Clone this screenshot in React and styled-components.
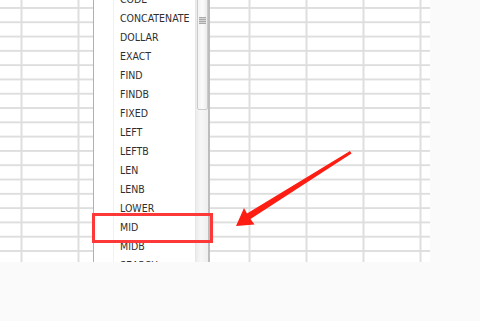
import React from "react";
import styled, { createGlobalStyle } from "styled-components";

const Global = createGlobalStyle`
  html, body { margin: 0; padding: 0; background: #fafafa; }
  body { font-family: "DejaVu Sans Condensed", "DejaVu Sans", sans-serif; }
`;

const Page = styled.div`
  width: 480px;
  height: 321px;
  background: #fafafa;
  overflow: hidden;
`;

const Sheet = styled.div`
  position: relative;
  width: 430px;
  height: 262px;
  overflow: hidden;
  background-color: #ffffff;
  background-image:
    linear-gradient(to bottom, #dedede 0, #dedede 1.5px, transparent 1.5px),
    linear-gradient(to right, #dedede 0, #dedede 2px, transparent 2px);
  background-size: 100% 14.3px, 57px 100%;
  background-position: 0 7px, 20.5px 0;
  display: flex;
`;

const Dropdown = styled.div`
  margin-left: 93px;
  width: 117px;
  height: 100%;
  display: flex;
  background: #ffffff;
  border-left: 1px solid #b0b0b0;
  border-right: 2px solid #bdbdbd;
  box-sizing: border-box;
`;

const List = styled.ul`
  flex: 1;
  list-style: none;
  margin: -10px 0 0 19px;
  padding: 0 0 0 6px;
  border-left: 1px solid #f2f2f2;
`;

const Item = styled.li`
  height: 19px;
  line-height: 19px;
  font-size: 10.5px;
  font-stretch: condensed;
  color: #2f2f2f;
  white-space: nowrap;
`;

const Scrollbar = styled.div`
  width: 12px;
  height: 100%;
  background: linear-gradient(to right, #ececec, #f7f7f7 40%, #efefef);
  border-left: 1px solid #e6e6e6;
  display: flex;
  flex-direction: column;
  align-items: center;
`;

const Thumb = styled.div`
  width: 11px;
  height: 112px;
  margin-top: -2px;
  box-sizing: border-box;
  border: 1px solid #cbcbcb;
  border-radius: 2px;
  background: linear-gradient(to right, #f3f3f3, #fbfbfb 50%, #ececec);
  display: flex;
  justify-content: center;
  padding-top: 18px;
`;

const Grip = styled.div`
  width: 7px;
  height: 7px;
  background: repeating-linear-gradient(
    to bottom,
    #a9a9a9 0,
    #a9a9a9 1px,
    #d6d6d6 1px,
    #d6d6d6 2px
  );
`;

const Highlight = styled.div`
  position: absolute;
  left: 92px;
  top: 213px;
  width: 121px;
  height: 30px;
  box-sizing: border-box;
  border: 3px solid #fd3838;
`;

const Arrow = styled.svg`
  position: absolute;
  left: 0;
  top: 0;
  width: 430px;
  height: 262px;
  pointer-events: none;
`;

const items = [
  "CODE",
  "CONCATENATE",
  "DOLLAR",
  "EXACT",
  "FIND",
  "FINDB",
  "FIXED",
  "LEFT",
  "LEFTB",
  "LEN",
  "LENB",
  "LOWER",
  "MID",
  "MIDB",
  "SEARCH",
];

export default function App() {
  return (
    <Page>
      <Global />
      <Sheet>
        <Dropdown>
          <List>
            {items.map((t) => (
              <Item key={t}>{t}</Item>
            ))}
          </List>
          <Scrollbar>
            <Thumb>
              <Grip />
            </Thumb>
          </Scrollbar>
        </Dropdown>
        <Highlight />
        <Arrow viewBox="0 0 430 262">
          <polygon
            points="236,226 244,208 247,213.5 350,151 351.5,153.5 250.5,219 254.5,224.5"
            fill="#fd1d12"
          />
        </Arrow>
      </Sheet>
    </Page>
  );
}
